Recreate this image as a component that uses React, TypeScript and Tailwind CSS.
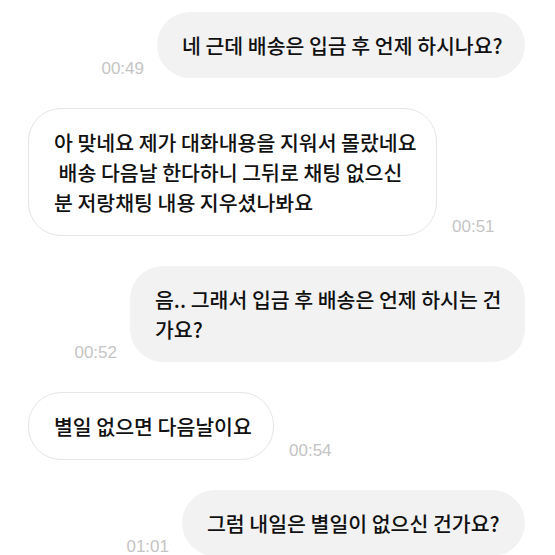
const messages = [
  { side: "me", time: "00:49", width: "w-[368px]", lines: ["네 근데 배송은 입금 후 언제 하시나요?"] },
  {
    side: "them",
    time: "00:51",
    width: "w-[409px]",
    lines: ["아 맞네요 제가 대화내용을 지워서 몰랐네요", " 배송 다음날 한다하니 그뒤로 채팅 없으신", "분 저랑채팅 내용 지우셨나봐요"],
  },
  { side: "me", time: "00:52", width: "w-[395px]", lines: ["음.. 그래서 입금 후 배송은 언제 하시는 건", "가요?"] },
  { side: "them", time: "00:54", width: "w-[246px]", lines: ["별일 없으면 다음날이요"] },
  { side: "me", time: "01:01", width: "w-[343px]", lines: ["그럼 내일은 별일이 없으신 건가요?"] },
];

function Time({ text }: { text: string }) {
  return (
    <span className="mb-[1px] font-['Liberation_Sans',sans-serif] text-[17px] leading-none text-[#c4c4c4]">
      {text}
    </span>
  );
}

function Bubble({ lines, mine, width }: { lines: string[]; mine: boolean; width: string }) {
  return (
    <div
      className={`${width} shrink-0 rounded-[33px] px-[25px] py-[18px] ${
        mine ? "bg-[#f2f2f2]" : "border border-[#e6e6e6] bg-white"
      }`}
    >
      {lines.map((line, i) => (
        <div key={i} className="whitespace-pre text-[20.5px] font-medium leading-[30px] text-[#111111]">
          {line}
        </div>
      ))}
    </div>
  );
}

export default function App() {
  return (
    <div className="flex h-[555px] w-[555px] flex-col gap-[30px] overflow-hidden bg-white pt-[12px] font-['Noto_Sans_CJK_KR',sans-serif]">
      {messages.map((m, i) =>
        m.side === "me" ? (
          <div key={i} className="flex items-end justify-end gap-[13px] pr-[30px]">
            <Time text={m.time} />
            <Bubble lines={m.lines} mine width={m.width} />
          </div>
        ) : (
          <div key={i} className="flex items-end gap-[15px] pl-[28px]">
            <Bubble lines={m.lines} mine={false} width={m.width} />
            <Time text={m.time} />
          </div>
        )
      )}
    </div>
  );
}
